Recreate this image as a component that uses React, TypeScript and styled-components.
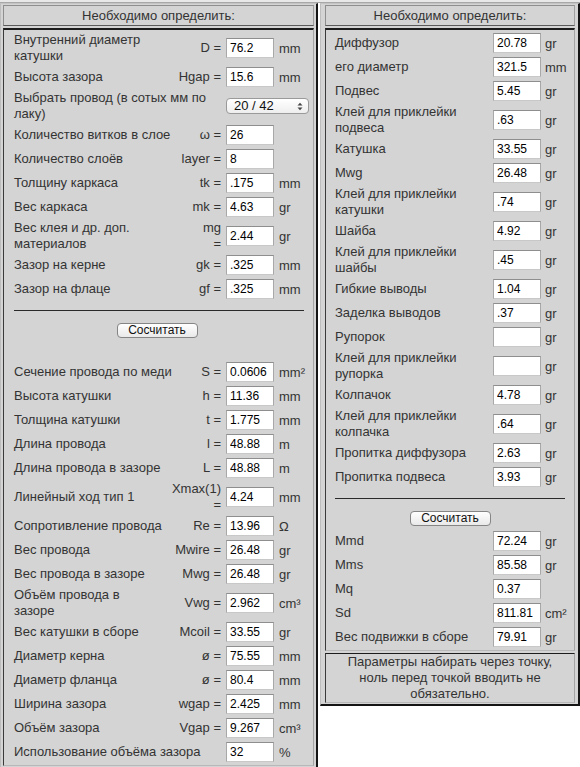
import React from "react";
import styled, { createGlobalStyle } from "styled-components";

const GlobalStyle = createGlobalStyle`
  html, body { margin: 0; padding: 0; background: #ffffff; }
  body { font-family: "Liberation Sans", Arial, sans-serif; font-size: 13px; color: #333; }
  * { box-sizing: border-box; }
`;

const TopStrip = styled.div`
  height: 3px;
  background: #e8e8e8;
  border-bottom: 1px solid #a8a8a8;
`;

const Page = styled.div`
  display: flex;
  align-items: flex-start;
  gap: 2px;
`;

const Panel = styled.div<{ $w: number; $pl: number; $pr: number }>`
  width: ${(p) => p.$w}px;
  background: #d4d4d4;
  border-top: 1px solid #c4c4c4;
  border-left: 1px solid #bdbdbd;
  border-right: 2px solid #141414;
  border-bottom: 2px solid #141414;
  padding: 1px ${(p) => p.$pr}px 1px ${(p) => p.$pl}px;
  display: flex;
  flex-direction: column;
  gap: 2px;
`;

const HeaderCell = styled.div`
  height: 21px;
  border: 1px solid #8e8e8e;
  border-bottom-color: #5a5a5a;
  border-right-color: #a0a0a0;
  display: flex;
  align-items: center;
  justify-content: center;
  font-size: 13px;
  color: #333;
`;

const ContentCell = styled.div<{ $pl: number; $pr: number }>`
  border-top: 2px solid #1c1c1c;
  border-left: 1px solid #3a3a3a;
  border-right: 1px solid #a4a4a4;
  border-bottom: 1px solid #b8b8b8;
  padding: 2px ${(p) => p.$pr}px 2px ${(p) => p.$pl}px;
`;

const Rows = styled.div<{ $cols: string }>`
  display: grid;
  grid-template-columns: ${(p) => p.$cols};
  column-gap: ${(p) => (p.$cols.split(" ").length === 4 ? 4 : 5)}px;
  row-gap: 2px;
  align-items: center;
`;

const Label = styled.div<{ $span?: number }>`
  grid-column: span ${(p) => p.$span ?? 1};
  line-height: 16px;
  white-space: nowrap;
  min-height: 22px;
  display: flex;
  align-items: center;
  color: #333;
`;

const Symbol = styled.div`
  text-align: right;
  line-height: 16px;
  white-space: nowrap;
  color: #333;
`;

const Unit = styled.div`
  white-space: nowrap;
  color: #333;
  font-size: 13px;
`;

const Field = styled.input`
  width: 48px;
  height: 20px;
  margin: 0;
  padding: 0 3px;
  border: 1px solid #a8a8a8;
  border-top-color: #8e8e8e;
  border-bottom-color: #c8c8c8;
  background: #fff;
  font-family: "Liberation Sans", Arial, sans-serif;
  font-size: 12px;
  color: #000;
  outline: none;
`;

const SelectWrap = styled.div`
  grid-column: span 2;
  position: relative;
  height: 16px;
`;

const Select = styled.select`
  appearance: none;
  -webkit-appearance: none;
  width: 100%;
  height: 16px;
  margin: 0;
  padding: 0 0 0 7px;
  border: 1px solid #9a9a9a;
  border-radius: 4px;
  background: linear-gradient(#ffffff, #eeeeee);
  font-family: "Liberation Sans", Arial, sans-serif;
  font-size: 13px;
  line-height: 14px;
  color: #111;
  outline: none;
`;

const Arrows = styled.svg`
  position: absolute;
  right: 6px;
  top: 4px;
  pointer-events: none;
`;

const Divider = styled.div<{ $mt: number; $mr: number }>`
  margin: ${(p) => p.$mt}px ${(p) => p.$mr}px 0 0;
  height: 1px;
  background: #2a2a2a;
`;

const ButtonRow = styled.div<{ $mt: number; $mb: number; $shift: number }>`
  display: flex;
  justify-content: center;
  margin: ${(p) => p.$mt}px 0 ${(p) => p.$mb}px 0;
  padding-right: ${(p) => p.$shift}px;
`;

const CalcButton = styled.button`
  width: 81px;
  height: 15px;
  padding: 0;
  border: 1px solid #858585;
  border-radius: 4px;
  background: linear-gradient(#ffffff, #e9e9e9);
  font-family: "Liberation Sans", Arial, sans-serif;
  font-size: 12px;
  line-height: 13px;
  color: #111;
`;

const FooterCell = styled.div`
  border-top: 1px solid #1c1c1c;
  border-left: 1px solid #3a3a3a;
  border-right: 1px solid #a4a4a4;
  border-bottom: 1px solid #b8b8b8;
  padding: 0 4px;
  text-align: center;
  line-height: 16px;
  color: #333;
`;

type LRow = { label: string[]; sym?: string[]; value: string; unit?: string };

const leftTop: LRow[] = [
  { label: ["Внутренний диаметр", "катушки"], sym: ["D ="], value: "76.2", unit: "mm" },
  { label: ["Высота зазора"], sym: ["Hgap ="], value: "15.6", unit: "mm" },
  { label: ["Выбрать провод (в сотых мм по", "лаку)"], value: "__select__" },
  { label: ["Количество витков в слое"], sym: ["ω ="], value: "26" },
  { label: ["Количество слоёв"], sym: ["layer ="], value: "8" },
  { label: ["Толщину каркаса"], sym: ["tk ="], value: ".175", unit: "mm" },
  { label: ["Вес каркаса"], sym: ["mk ="], value: "4.63", unit: "gr" },
  { label: ["Вес клея и др. доп.", "материалов"], sym: ["mg", "="], value: "2.44", unit: "gr" },
  { label: ["Зазор на керне"], sym: ["gk ="], value: ".325", unit: "mm" },
  { label: ["Зазор на флаце"], sym: ["gf ="], value: ".325", unit: "mm" },
];

const leftBottom: LRow[] = [
  { label: ["Сечение провода по меди"], sym: ["S ="], value: "0.0606", unit: "mm²" },
  { label: ["Высота катушки"], sym: ["h ="], value: "11.36", unit: "mm" },
  { label: ["Толщина катушки"], sym: ["t ="], value: "1.775", unit: "mm" },
  { label: ["Длина провода"], sym: ["l ="], value: "48.88", unit: "m" },
  { label: ["Длина провода в зазоре"], sym: ["L ="], value: "48.88", unit: "m" },
  { label: ["Линейный ход тип 1"], sym: ["Xmax(1)", "="], value: "4.24", unit: "mm" },
  { label: ["Сопротивление провода"], sym: ["Re ="], value: "13.96", unit: "Ω" },
  { label: ["Вес провода"], sym: ["Mwire ="], value: "26.48", unit: "gr" },
  { label: ["Вес провода в зазоре"], sym: ["Mwg ="], value: "26.48", unit: "gr" },
  { label: ["Объём провода в", "зазоре"], sym: ["Vwg ="], value: "2.962", unit: "cm³" },
  { label: ["Вес катушки в сборе"], sym: ["Mcoil ="], value: "33.55", unit: "gr" },
  { label: ["Диаметр керна"], sym: ["ø ="], value: "75.55", unit: "mm" },
  { label: ["Диаметр фланца"], sym: ["ø ="], value: "80.4", unit: "mm" },
  { label: ["Ширина зазора"], sym: ["wgap ="], value: "2.425", unit: "mm" },
  { label: ["Объём зазора"], sym: ["Vgap ="], value: "9.267", unit: "cm³" },
  { label: ["Использование объёма зазора"], value: "32", unit: "%" },
];

type RRow = { label: string[]; value: string; unit?: string };

const rightTop: RRow[] = [
  { label: ["Диффузор"], value: "20.78", unit: "gr" },
  { label: ["его диаметр"], value: "321.5", unit: "mm" },
  { label: ["Подвес"], value: "5.45", unit: "gr" },
  { label: ["Клей для приклейки", "подвеса"], value: ".63", unit: "gr" },
  { label: ["Катушка"], value: "33.55", unit: "gr" },
  { label: ["Mwg"], value: "26.48", unit: "gr" },
  { label: ["Клей для приклейки", "катушки"], value: ".74", unit: "gr" },
  { label: ["Шайба"], value: "4.92", unit: "gr" },
  { label: ["Клей для приклейки", "шайбы"], value: ".45", unit: "gr" },
  { label: ["Гибкие выводы"], value: "1.04", unit: "gr" },
  { label: ["Заделка выводов"], value: ".37", unit: "gr" },
  { label: ["Рупорок"], value: "", unit: "gr" },
  { label: ["Клей для приклейки", "рупорка"], value: "", unit: "gr" },
  { label: ["Колпачок"], value: "4.78", unit: "gr" },
  { label: ["Клей для приклейки", "колпачка"], value: ".64", unit: "gr" },
  { label: ["Пропитка диффузора"], value: "2.63", unit: "gr" },
  { label: ["Пропитка подвеса"], value: "3.93", unit: "gr" },
];

const rightBottom: RRow[] = [
  { label: ["Mmd"], value: "72.24", unit: "gr" },
  { label: ["Mms"], value: "85.58", unit: "gr" },
  { label: ["Mq"], value: "0.37" },
  { label: ["Sd"], value: "811.81", unit: "cm²" },
  { label: ["Вес подвижки в сборе"], value: "79.91", unit: "gr" },
];

const Lines = ({ lines }: { lines: string[] }) => (
  <span>
    {lines.map((l, i) => (
      <React.Fragment key={i}>
        {i > 0 && <br />}
        {l}
      </React.Fragment>
    ))}
  </span>
);

const LEFT_COLS = "minmax(0, 1fr) auto 48px 30px";
const RIGHT_COLS = "minmax(0, 1fr) 48px 28px";

const LeftRows = ({ rows }: { rows: LRow[] }) => (
  <Rows $cols={LEFT_COLS}>
    {rows.map((r, i) => {
      if (r.value === "__select__") {
        return (
          <React.Fragment key={i}>
            <Label $span={2}>
              <Lines lines={r.label} />
            </Label>
            <SelectWrap>
              <Select defaultValue="20">
                <option value="20">20 / 42</option>
              </Select>
              <Arrows width="6" height="9" viewBox="0 0 6 9">
                <path d="M0.5 3.5 L3 0.8 L5.5 3.5 Z" fill="#444" />
                <path d="M0.5 5.5 L3 8.2 L5.5 5.5 Z" fill="#444" />
              </Arrows>
            </SelectWrap>
          </React.Fragment>
        );
      }
      return (
        <React.Fragment key={i}>
          <Label $span={r.sym ? 1 : 2}>
            <Lines lines={r.label} />
          </Label>
          {r.sym && (
            <Symbol>
              <Lines lines={r.sym} />
            </Symbol>
          )}
          <Field defaultValue={r.value} />
          <Unit>{r.unit ?? ""}</Unit>
        </React.Fragment>
      );
    })}
  </Rows>
);

const RightRows = ({ rows }: { rows: RRow[] }) => (
  <Rows $cols={RIGHT_COLS}>
    {rows.map((r, i) => (
      <React.Fragment key={i}>
        <Label>
          <Lines lines={r.label} />
        </Label>
        <Field defaultValue={r.value} />
        <Unit>{r.unit ?? ""}</Unit>
      </React.Fragment>
    ))}
  </Rows>
);

export default function App() {
  return (
    <>
      <GlobalStyle />
      <TopStrip />
      <Page>
        <Panel $w={318} $pl={2} $pr={2}>
          <HeaderCell>Необходимо определить:</HeaderCell>
          <ContentCell $pl={10} $pr={4}>
            <LeftRows rows={leftTop} />
            <Divider $mt={10} $mr={5} />
            <ButtonRow $mt={12} $mb={23} $shift={9}>
              <CalcButton>Сосчитать</CalcButton>
            </ButtonRow>
            <LeftRows rows={leftBottom} />
          </ContentCell>
        </Panel>
        <Panel $w={260} $pl={4} $pr={3}>
          <HeaderCell>Необходимо определить:</HeaderCell>
          <ContentCell $pl={9} $pr={1}>
            <RightRows rows={rightTop} />
            <Divider $mt={10} $mr={8} />
            <ButtonRow $mt={12} $mb={4} $shift={8}>
              <CalcButton>Сосчитать</CalcButton>
            </ButtonRow>
            <RightRows rows={rightBottom} />
          </ContentCell>
          <FooterCell>
            Параметры набирать через точку,
            <br />
            ноль перед точкой вводить не
            <br />
            обязательно.
          </FooterCell>
        </Panel>
      </Page>
    </>
  );
}
